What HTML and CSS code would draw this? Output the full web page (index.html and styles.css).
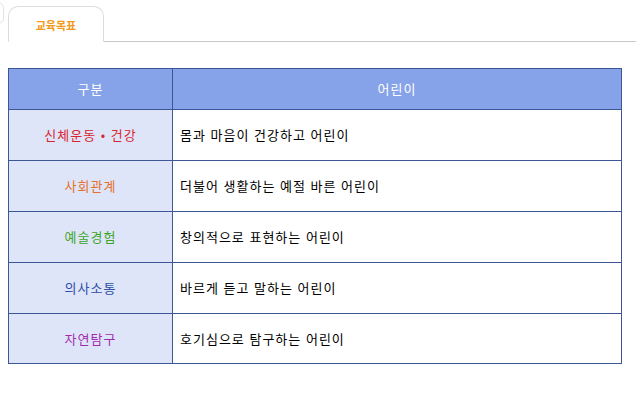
FILE: index.html
```html
<!DOCTYPE html>
<html lang="ko">
<head>
<meta charset="utf-8">
<link rel="stylesheet" href="styles.css">
</head>
<body>
<div class="tabs">
  <div class="edge"></div>
  <div class="tab">교육목표</div>
  <div class="rest"></div>
</div>
<table class="goals">
  <thead>
    <tr><th class="c1">구분</th><th>어린이</th></tr>
  </thead>
  <tbody>
    <tr><td class="cat red">신체운동 • 건강</td><td class="desc">몸과 마음이 건강하고 어린이</td></tr>
    <tr><td class="cat orange">사회관계</td><td class="desc">더불어 생활하는 예절 바른 어린이</td></tr>
    <tr><td class="cat green">예술경험</td><td class="desc">창의적으로 표현하는 어린이</td></tr>
    <tr><td class="cat blue">의사소통</td><td class="desc">바르게 듣고 말하는 어린이</td></tr>
    <tr class="last"><td class="cat purple">자연탐구</td><td class="desc">호기심으로 탐구하는 어린이</td></tr>
  </tbody>
</table>
</body>
</html>
```
FILE: styles.css
```css
html, body {
  margin: 0;
  padding: 0;
  background: #fff;
  font-family: "Noto Sans CJK KR", "Noto Sans", sans-serif;
  font-size: 13px;
}
.tabs {
  display: flex;
  align-items: flex-end;
  padding-top: 6px;
  position: relative;
}
.edge {
  position: absolute;
  left: -8px;
  top: 2px;
  width: 10px;
  height: 20px;
  border: 1px solid #e4e4e4;
  border-radius: 8px;
}
.tab {
  margin-left: 8px;
  width: 94px;
  height: 35px;
  border: 1px solid #dcdcdc;
  border-bottom: none;
  border-radius: 10px 10px 0 0;
  color: #f09a22;
  font-weight: bold;
  font-size: 11px;
  line-height: 36px;
  text-align: center;
}
.rest {
  flex: 1;
  border-bottom: 1px solid #c8c8c8;
}
.goals {
  margin: 26px 0 0 8px;
  width: 614px;
  border-collapse: collapse;
}
.goals th, .goals td {
  border: 1px solid #3c5696;
  padding: 0;
  line-height: 16px;
  letter-spacing: 1px;
}
.goals th {
  height: 40px;
  background: #86a2e8;
  color: #fff;
  font-weight: normal;
  font-size: 13px;
  text-align: center;
}
.goals th.c1 { width: 163px; }
.goals td {
  height: 50px;
}
.goals tr.last td { height: 49px; }
.cat {
  background: #dfe5f9;
  text-align: center;
}
.desc {
  padding-left: 7px !important;
  color: #000;
}
.red { color: #d8262e; }
.orange { color: #e4702a; }
.green { color: #3ea52a; }
.blue { color: #2e4fa8; }
.purple { color: #a02cae; }
```
